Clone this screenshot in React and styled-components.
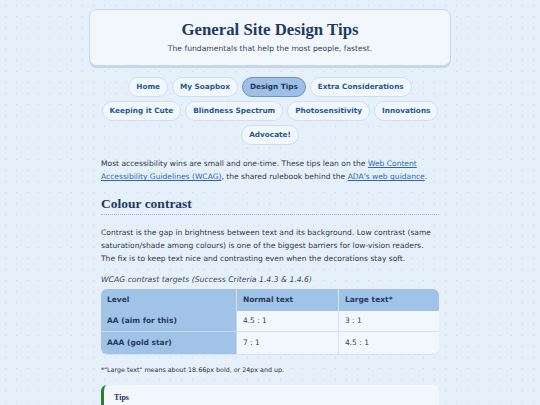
import React from "react";
import styled, { createGlobalStyle } from "styled-components";

const colors = {
  page: "#e6f0fb",
  dot: "#c8d7e8",
  card: "#f2f7fd",
  cardBorder: "#c8dbf0",
  navy: "#1f3a5f",
  text: "#2b3543",
  link: "#2a69ad",
  pillText: "#1f5a96",
  tableHead: "#a2c3e8",
  green: "#2e7d32",
};

const serif = `"Liberation Serif", Georgia, serif`;

const GlobalStyle = createGlobalStyle`
  html, body {
    margin: 0;
    padding: 0;
  }
  body {
    background-color: ${colors.page};
    background-image: radial-gradient(circle, ${colors.dot} 0.6px, transparent 0.9px);
    background-size: 11px 11px;
    font-family: "DejaVu Sans", Verdana, sans-serif;
    color: ${colors.text};
    min-height: 405px;
    overflow: hidden;
  }
`;

const Page = styled.div`
  width: 362px;
  margin: 0 auto;
  padding-top: 9px;
`;

const Header = styled.header`
  background: ${colors.card};
  border: 1px solid ${colors.cardBorder};
  border-radius: 8px;
  box-shadow: 0 2px 0 #c3d6ec;
  height: 57px;
  box-sizing: border-box;
  display: flex;
  flex-direction: column;
  align-items: center;
  justify-content: center;
  gap: 5px;
  padding-bottom: 2px;

  h1 {
    margin: 0;
    font-family: ${serif};
    font-size: 16.8px;
    font-weight: bold;
    color: ${colors.navy};
    line-height: 19px;
  }
  p {
    margin: 0;
    font-size: 7.65px;
    line-height: 10px;
    color: #38465a;
  }
`;

const Nav = styled.nav`
  margin-top: 11px;
  display: flex;
  flex-wrap: wrap;
  justify-content: center;
  gap: 4px;
  padding: 0 4px;
`;

const Pill = styled.a`
  display: inline-block;
  font-size: 7.3px;
  font-weight: bold;
  line-height: 10px;
  padding: 4px 7px;
  border-radius: 999px;
  text-decoration: none;
  border: 1px solid ${(p) => (p.$active ? "#6b93c3" : "#cddff2")};
  background: ${(p) => (p.$active ? "#9ebfe6" : colors.card)};
  color: ${(p) => (p.$active ? "#1d3658" : colors.pillText)};
`;

const Main = styled.main`
  padding: 0 12px;
  margin-top: 12px;
  font-size: 7.55px;
  line-height: 13.3px;
`;

const Para = styled.p`
  margin: 0;
  a {
    color: ${colors.link};
  }
`;

const SectionTitle = styled.h2`
  margin: 11px 0 11px;
  font-family: ${serif};
  font-size: 13.5px;
  font-weight: bold;
  color: ${colors.navy};
  line-height: 18px;
  padding-bottom: 1px;
  border-bottom: 1px dotted #9dbbdc;
`;

const Caption = styled.div`
  margin-top: 9px;
  font-style: italic;
  font-size: 7.7px;
  color: #3a4a5c;
  line-height: 11px;
`;

const Table = styled.table`
  margin-top: 4px;
  width: 100%;
  border-collapse: separate;
  border-spacing: 0;
  border-radius: 6px;
  overflow: hidden;
  font-size: 7.5px;
  line-height: 10px;
  box-shadow: 0 1px 0 #d3e2f3;

  th, td {
    text-align: left;
    padding: 0 6px;
    height: 21.5px;
    box-sizing: border-box;
    border-bottom: 1px solid #d4e3f4;
    border-right: 1px solid #d4e3f4;
  }
  tr:last-child td,
  tr:last-child th {
    border-bottom: none;
  }
  th:last-child, td:last-child {
    border-right: none;
  }
  thead th {
    background: ${colors.tableHead};
    color: ${colors.navy};
    font-weight: bold;
    border-bottom-color: #c1d6ee;
  }
  tbody th {
    background: ${colors.tableHead};
    color: ${colors.navy};
    font-weight: bold;
    border-bottom-color: #c4d8ef;
    border-right-color: #c4d8ef;
  }
  tbody td {
    background: ${colors.card};
    color: #3a4656;
  }
  col.first { width: 40.2%; }
  col.mid { width: 30.2%; }
`;

const Footnote = styled.p`
  margin: 11px 0 0;
  font-size: 6.35px;
  line-height: 10px;
  color: #2b3543;
`;

const Tips = styled.aside`
  margin-top: 10px;
  background: ${colors.card};
  border-left: 3px solid ${colors.green};
  border-radius: 6px;
  padding: 7px 10px 0;
  height: 30px;
  box-sizing: border-box;

  h3 {
    margin: 0;
    font-family: ${serif};
    font-size: 8px;
    line-height: 12px;
    font-weight: bold;
    color: ${colors.navy};
  }
`;

const links = [
  "Home",
  "My Soapbox",
  "Design Tips",
  "Extra Considerations",
  "Keeping it Cute",
  "Blindness Spectrum",
  "Photosensitivity",
  "Innovations",
  "Advocate!",
];

export default function App() {
  return (
    <>
      <GlobalStyle />
      <Page>
        <Header>
          <h1>General Site Design Tips</h1>
          <p>The fundamentals that help the most people, fastest.</p>
        </Header>
        <Nav>
          {links.map((l) => (
            <Pill key={l} href="#" $active={l === "Design Tips"}>
              {l}
            </Pill>
          ))}
        </Nav>
        <Main>
          <Para>
            Most accessibility wins are small and one-time. These tips lean on the{" "}
            <a href="#">Web Content Accessibility Guidelines (WCAG)</a>, the shared
            rulebook behind the <a href="#">ADA's web guidance</a>.
          </Para>
          <SectionTitle>Colour contrast</SectionTitle>
          <Para>
            Contrast is the gap in brightness between text and its background. Low
            contrast (same saturation/shade among colours) is one of the biggest
            barriers for low-vision readers. The fix is to keep text nice and
            contrasting even when the decorations stay soft.
          </Para>
          <Caption>WCAG contrast targets (Success Criteria 1.4.3 &amp; 1.4.6)</Caption>
          <Table>
            <colgroup>
              <col className="first" />
              <col className="mid" />
              <col />
            </colgroup>
            <thead>
              <tr>
                <th>Level</th>
                <th>Normal text</th>
                <th>Large text*</th>
              </tr>
            </thead>
            <tbody>
              <tr>
                <th>AA (aim for this)</th>
                <td>4.5 : 1</td>
                <td>3 : 1</td>
              </tr>
              <tr>
                <th>AAA (gold star)</th>
                <td>7 : 1</td>
                <td>4.5 : 1</td>
              </tr>
            </tbody>
          </Table>
          <Footnote>*"Large text" means about 18.66px bold, or 24px and up.</Footnote>
          <Tips>
            <h3>Tips</h3>
          </Tips>
        </Main>
      </Page>
    </>
  );
}
